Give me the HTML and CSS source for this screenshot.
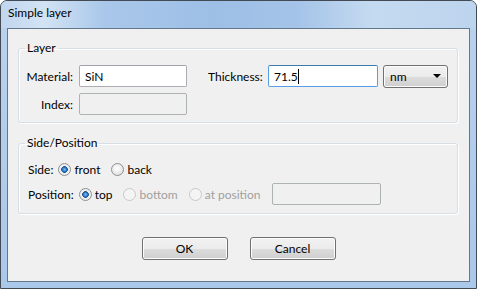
FILE: index.html
```html
<!DOCTYPE html>
<html lang="en">
<head>
    <meta charset="UTF-8">
    <title>Simple layer</title>
    <link rel="stylesheet" href="styles.css">
</head>
<body>
    <div class="window">
        <div class="titlebar">Simple layer</div>
        <div class="frame">
            <div class="client">
                <fieldset class="group group-layer">
                    <legend>Layer</legend>
                    <div class="row">
                        <label class="label">Material:</label>
                        <input class="field field-material" type="text" value="SiN">
                        <label class="label label-thickness">Thickness:</label>
                        <div class="field field-thickness focused">71.5<span class="caret"></span></div>
                        <div class="combo">nm<span class="arrow"></span></div>
                    </div>
                    <div class="row">
                        <label class="label">Index:</label>
                        <input class="field field-material" type="text" disabled>
                    </div>
                </fieldset>

                <!-- Side / Position -->
                <fieldset class="group group-side">
                    <legend>Side/Position</legend>
                    <div class="row">
                        <span class="caption">Side:</span>
                        <label class="option"><input class="radio" type="radio" name="side" checked>front</label>
                        <label class="option"><input class="radio" type="radio" name="side">back</label>
                    </div>
                    <div class="row">
                        <span class="caption">Position:</span>
                        <label class="option"><input class="radio" type="radio" name="pos" checked>top</label>
                        <label class="option disabled"><input class="radio" type="radio" name="pos" disabled>bottom</label>
                        <label class="option disabled"><input class="radio" type="radio" name="pos" disabled>at position</label>
                        <input class="field field-position" type="text" disabled>
                    </div>
                </fieldset>

                <div class="buttons">
                    <button class="button">OK</button>
                    <button class="button">Cancel</button>
                </div>
            </div>
        </div>
    </div>
</body>
</html>
```

FILE: styles.css
```css
body {
    margin: 0;
    padding: 0;
    font-family: 'Lato', 'Noto Sans', sans-serif;
    font-size: 12px;
    color: #000;
    background: #fff;
}

.window {
    width: 477px;
    height: 289px;
    box-sizing: border-box;
    border: 1px solid #434a54;
    border-radius: 7px 7px 0 0;
    background-color: #b2cdec;
    display: flex;
    flex-direction: column;
    overflow: hidden;
}

.titlebar {
    height: 27px;
    line-height: 24px;
    padding-left: 7px;
    background: linear-gradient(90deg, #c0d6ee 0%, #d2e3f4 9%, #a9c7ea 22%, #9dbfe6 45%, #a4c3e8 62%, #c4daf0 78%, #bdd4ee 100%);
}

.frame {
    flex: 1;
    display: flex;
    padding: 0 6px 6px 6px;
    background: linear-gradient(180deg, #b8d1ee, #aac8ea);
}

.client {
    flex: 1;
    border: 1px solid #65778c;
    background-color: #f0f0f0;
    display: flex;
    flex-direction: column;
}

.group {
    margin: 0 11px 0 10px;
    padding: 0;
    border: 1px solid #d5dfe5;
    border-radius: 3px;
    box-shadow: inset 1px 1px 0 #fff, 1px 1px 0 #fff;
}

.group legend {
    margin-left: 6px;
    padding: 0 2px;
    line-height: 16px;
}

.group-layer {
    margin-top: 11px;
    padding: 9px 0 7px 0;
}

.group-side {
    margin-top: 12px;
    padding: 7px 0 8px 0;
}

.row {
    display: flex;
    align-items: center;
    height: 22px;
}

.group-layer .row + .row {
    margin-top: 6px;
}

.group-side .row + .row {
    margin-top: 3px;
}

.label {
    width: 54px;
    margin-right: 6px;
    text-align: right;
}

.label-thickness {
    width: 54px;
    margin-left: 21px;
    text-align: left;
}

.field {
    box-sizing: border-box;
    height: 22px;
    margin: 0;
    padding: 0 5px;
    border: 1px solid #abadb3;
    border-top-color: #a0a3a9;
    border-radius: 2px;
    background: #fff;
    font: inherit;
    color: #000;
    outline: none;
}

.field:disabled {
    background: #f0f0f0;
    border-color: #adb2b5;
}

.field-material {
    width: 108px;
}

.field-thickness {
    width: 110px;
    display: flex;
    align-items: center;
}

.focused {
    border-color: #569de5;
    border-top-color: #3d7bad;
}

.caret {
    display: inline-block;
    width: 1px;
    height: 15px;
    background: #000;
}

.combo {
    box-sizing: border-box;
    width: 65px;
    height: 23px;
    margin-left: 5px;
    padding: 0 6px 0 6px;
    border: 1px solid #707070;
    border-radius: 3px;
    background: linear-gradient(180deg, #f2f2f2 0%, #ebebeb 50%, #dddddd 51%, #cfcfcf 100%);
    box-shadow: inset 0 0 0 1px #fcfcfc;
    display: flex;
    align-items: center;
    justify-content: space-between;
}

.arrow {
    width: 0;
    height: 0;
    border-left: 4px solid transparent;
    border-right: 4px solid transparent;
    border-top: 4px solid #000;
}

.caption {
    margin-left: 9px;
    margin-right: 5px;
}

.option {
    display: flex;
    align-items: center;
    margin-right: 11px;
}

.option.disabled {
    color: #a0a0a0;
}

.radio {
    appearance: none;
    width: 13px;
    height: 13px;
    margin: 0 3px 0 0;
    border: 1px solid #8e8f8f;
    border-radius: 50%;
    background: radial-gradient(circle at 45% 40%, #ffffff 0%, #f0f0f0 40%, #d8d8d8 100%);
}

.radio:checked {
    background: radial-gradient(circle at 50% 50%, #7cc3f5 0, #2b79c9 2px, #1b4f8f 3px, #eaeaea 3.6px, #f8f8f8 100%);
}

.radio:disabled {
    border-color: #c8c8c8;
    background: #f4f4f4;
}

.field-position {
    width: 109px;
    margin-left: 0;
}

.buttons {
    display: flex;
    justify-content: center;
    gap: 22px;
    margin-top: 23px;
}

.button {
    box-sizing: border-box;
    width: 86px;
    height: 23px;
    padding: 0;
    border: 1px solid #707070;
    border-radius: 3px;
    background: linear-gradient(180deg, #f2f2f2 0%, #ebebeb 50%, #dddddd 51%, #cfcfcf 100%);
    box-shadow: inset 0 0 0 1px #fcfcfc;
    font: inherit;
    color: #000;
}
```
